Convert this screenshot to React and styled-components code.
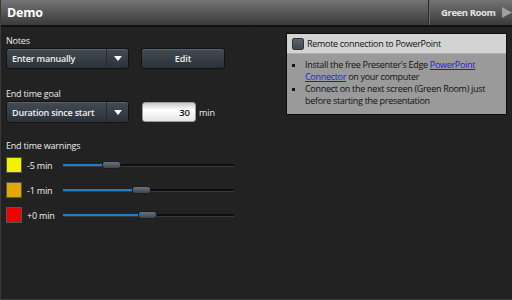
import styled, { createGlobalStyle } from "styled-components"

const GlobalStyle = createGlobalStyle`
    html, body {
        margin: 0;
        padding: 0;
        background: #222222;
    }
    * {
        box-sizing: border-box;
    }
`

const warnings = [
    { color: "#f2f200", label: "-5 min", value: 24.5 },
    { color: "#e0a800", label: "-1 min", value: 42 },
    { color: "#f00000", label: "+0 min", value: 45.6 },
]

export default function App() {
    return (
        <Page>
            <GlobalStyle />
            <Header>
                <Title>Demo</Title>
                <NextButton>
                    <span>Green Room</span>
                    <svg width="10" height="11" viewBox="0 0 10 11">
                        <polygon points="0,0 10,5.5 0,11" fill="#a0a0a0" />
                    </svg>
                </NextButton>
            </Header>
            <Main>
                <LeftColumn>
                    <Label>Notes</Label>
                    <ControlRow>
                        <Select>
                            <span>Enter manually</span>
                            <Arrow />
                        </Select>
                        <Button>Edit</Button>
                    </ControlRow>

                    <Label $top={19}>End time goal</Label>
                    <ControlRow>
                        <Select $tall>
                            <span>Duration since start</span>
                            <Arrow />
                        </Select>
                        <NumberBox>30</NumberBox>
                        <Unit>min</Unit>
                    </ControlRow>

                    <Label $top={17}>End time warnings</Label>
                    <WarningList>
                        {warnings.map((w) => (
                            <WarningRow key={w.label}>
                                <Swatch $color={w.color} />
                                <WarnLabel>{w.label}</WarnLabel>
                                <Track>
                                    <Fill style={{ width: `${w.value}%` }} />
                                    <Thumb style={{ left: `calc(${w.value}% - 3px)` }} />
                                </Track>
                            </WarningRow>
                        ))}
                    </WarningList>
                </LeftColumn>

                <Panel>
                    <PanelHead>
                        <Check />
                        <span>Remote connection to PowerPoint</span>
                    </PanelHead>
                    <PanelBody>
                        <li>
                            Install the free Presenter's Edge <a href="#">PowerPoint</a>{" "}
                            <a href="#">Connector</a> on your computer
                        </li>
                        <li>Connect on the next screen (Green Room) just before starting the presentation</li>
                    </PanelBody>
                </Panel>
            </Main>
        </Page>
    )
}

const Page = styled.div`
    width: 512px;
    height: 300px;
    background: #222222;
    border-left: 1px solid #3a3a3a;
    border-bottom: 1px solid #3a3a3a;
    font-family: "Open Sans", "Noto Sans", sans-serif;
    color: #e8e8e8;
    overflow: hidden;
`

const Header = styled.div`
    height: 27px;
    display: flex;
    align-items: stretch;
    background: linear-gradient(#747474, #3a3a3a);
    border-bottom: 2px solid #111111;
`

const Title = styled.div`
    flex: 1;
    padding-left: 6px;
    display: flex;
    align-items: center;
    font-size: 12.5px;
    font-weight: 700;
    color: #ffffff;
    letter-spacing: -0.2px;
`

const NextButton = styled.div`
    width: 84px;
    display: flex;
    align-items: center;
    gap: 6px;
    padding-left: 12px;
    border-left: 1px solid #2c2c2c;
    box-shadow: inset 1px 0 0 #6a6a6a;
    font-size: 9.5px;
    font-weight: 700;
    color: #e4e4e4;
    letter-spacing: -0.4px;
    white-space: nowrap;
`

const Main = styled.div`
    display: flex;
    align-items: flex-start;
    padding: 0 5px 0 5px;
`

const LeftColumn = styled.div`
    width: 240px;
    padding-top: 8px;
`

const Label = styled.div`
    font-size: 9px;
    line-height: 12px;
    color: #ececec;
    margin-top: ${(p) => p.$top || 0}px;
    margin-bottom: 1px;
    letter-spacing: -0.2px;
`

const ControlRow = styled.div`
    display: flex;
    align-items: center;
`

const Select = styled.div`
    width: 123px;
    height: ${(p) => (p.$tall ? 22 : 21)}px;
    display: flex;
    align-items: center;
    padding-left: 5px;
    border: 1px solid #121212;
    border-radius: 3px;
    background: linear-gradient(#434b53, #2b3137);
    box-shadow: inset 0 1px 0 #59626b;
    font-size: 9px;
    font-weight: 600;
    color: #f0f0f0;
    letter-spacing: -0.2px;
`

const Arrow = styled.div`
    margin-left: auto;
    width: 22px;
    height: 100%;
    border-left: 1px solid #262b30;
    display: flex;
    align-items: center;
    justify-content: center;

    &::after {
        content: "";
        border-left: 4px solid transparent;
        border-right: 4px solid transparent;
        border-top: 5px solid #ffffff;
    }
`

const Button = styled.div`
    width: 84px;
    height: 21px;
    margin-left: 12px;
    display: flex;
    align-items: center;
    justify-content: center;
    border: 1px solid #121212;
    border-radius: 3px;
    background: linear-gradient(#434b53, #2b3137);
    box-shadow: inset 0 1px 0 #59626b;
    font-size: 9px;
    font-weight: 600;
    color: #f0f0f0;
`

const NumberBox = styled.div`
    width: 54px;
    height: 20px;
    margin-left: 13px;
    padding-right: 5px;
    display: flex;
    align-items: center;
    justify-content: flex-end;
    border: 1px solid #9a9a9a;
    border-radius: 3px;
    background: linear-gradient(#c9c9c9, #ffffff 40%, #e4e4e4);
    font-size: 9.5px;
    font-weight: 600;
    color: #111111;
`

const Unit = styled.span`
    margin-left: 3px;
    font-size: 9px;
    color: #eeeeee;
`

const WarningList = styled.div`
    margin-top: 5px;
    display: flex;
    flex-direction: column;
    gap: 9px;
`

const WarningRow = styled.div`
    display: flex;
    align-items: center;
    height: 16px;
`

const Swatch = styled.div`
    width: 16px;
    height: 16px;
    background: ${(p) => p.$color};
    border: 1px solid #555;
`

const WarnLabel = styled.span`
    width: 41px;
    padding-left: 5px;
    font-size: 9px;
    color: #f0f0f0;
    letter-spacing: -0.2px;
`

const Track = styled.div`
    position: relative;
    width: 171px;
    height: 2px;
    background: #0e0e0e;
    box-shadow: 0 1px 0 #3a3a3a;
`

const Fill = styled.div`
    height: 100%;
    background: #1e7fc6;
`

const Thumb = styled.div`
    position: absolute;
    top: -3px;
    width: 19px;
    height: 8px;
    border-radius: 3px;
    border: 1px solid #1a1d20;
    background: linear-gradient(#6a747e, #3d444b);
`

const Panel = styled.div`
    margin-left: auto;
    margin-top: 6px;
    width: 221px;
    height: 82px;
    border: 1px solid #0c0c0c;
    background: #9a9a9a;
`

const PanelHead = styled.div`
    height: 20px;
    display: flex;
    align-items: center;
    gap: 3px;
    padding-left: 5px;
    background: #d3d3d3;
    border-bottom: 1px solid #b0b0b0;
    font-size: 9px;
    color: #111111;
    letter-spacing: -0.3px;
`

const Check = styled.div`
    width: 12px;
    height: 12px;
    border-radius: 2px;
    background: linear-gradient(#5b6670, #3f4850);
    border: 1px solid #2e343a;
`

const PanelBody = styled.ul`
    margin: 0;
    padding: 5px 8px 0 18px;
    list-style: square;
    font-size: 9px;
    line-height: 12px;
    color: #111111;
    letter-spacing: -0.3px;

    a {
        color: #1a1ae0;
        text-decoration: underline;
    }
`
